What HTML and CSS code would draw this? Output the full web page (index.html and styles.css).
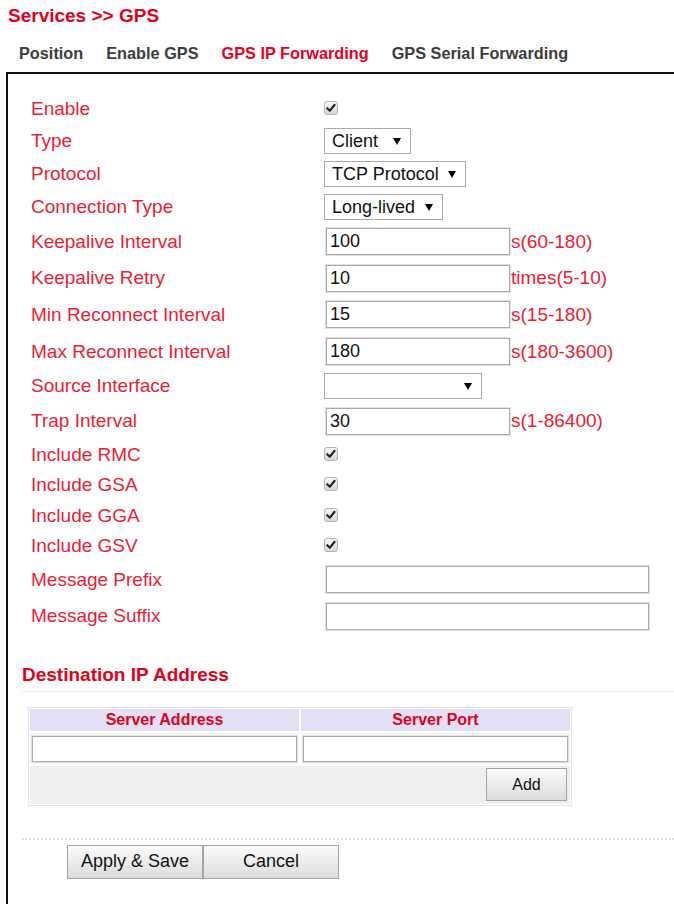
FILE: index.html
```html
<!DOCTYPE html>
<html lang="en">
<head>
<meta charset="utf-8">
<title>Services &gt;&gt; GPS</title>
<link rel="stylesheet" href="styles.css">
</head>
<body>
<div class="page">
  <h1 class="title">Services &gt;&gt; GPS</h1>
  <nav class="tabs">
    <a class="tab">Position</a>
    <a class="tab">Enable GPS</a>
    <a class="tab active">GPS IP Forwarding</a>
    <a class="tab">GPS Serial Forwarding</a>
  </nav>
  <div class="box">
    <form class="form">
      <div class="row r-cb"><label class="lbl">Enable</label><span class="check"><svg viewBox="0 0 14 14" width="12" height="12"><path d="M2.6 7.2 L5.6 10.2 L11.2 3.2" fill="none" stroke="#222" stroke-width="2.4" stroke-linecap="round" stroke-linejoin="round"/></svg></span></div>
      <div class="row r-sel"><label class="lbl">Type</label><span class="sel"><select class="w-client"><option>Client</option></select></span></div>
      <div class="row r-sel"><label class="lbl">Protocol</label><span class="sel"><select class="w-tcp"><option>TCP Protocol</option></select></span></div>
      <div class="row r-sel"><label class="lbl">Connection Type</label><span class="sel"><select class="w-long"><option>Long-lived</option></select></span></div>
      <div class="row r-inp"><label class="lbl">Keepalive Interval</label><input class="txt" type="text" value="100"><span class="unit">s(60-180)</span></div>
      <div class="row r-inp"><label class="lbl">Keepalive Retry</label><input class="txt" type="text" value="10"><span class="unit">times(5-10)</span></div>
      <div class="row r-inp"><label class="lbl">Min Reconnect Interval</label><input class="txt" type="text" value="15"><span class="unit">s(15-180)</span></div>
      <div class="row r-inp"><label class="lbl">Max Reconnect Interval</label><input class="txt" type="text" value="180"><span class="unit">s(180-3600)</span></div>
      <div class="row r-sel"><label class="lbl">Source Interface</label><span class="sel"><select class="w-src"><option></option></select></span></div>
      <div class="row r-inp"><label class="lbl">Trap Interval</label><input class="txt" type="text" value="30"><span class="unit">s(1-86400)</span></div>
      <div class="row r-cb"><label class="lbl">Include RMC</label><span class="check"><svg viewBox="0 0 14 14" width="12" height="12"><path d="M2.6 7.2 L5.6 10.2 L11.2 3.2" fill="none" stroke="#222" stroke-width="2.4" stroke-linecap="round" stroke-linejoin="round"/></svg></span></div>
      <div class="row r-cb"><label class="lbl">Include GSA</label><span class="check"><svg viewBox="0 0 14 14" width="12" height="12"><path d="M2.6 7.2 L5.6 10.2 L11.2 3.2" fill="none" stroke="#222" stroke-width="2.4" stroke-linecap="round" stroke-linejoin="round"/></svg></span></div>
      <div class="row r-cb"><label class="lbl">Include GGA</label><span class="check"><svg viewBox="0 0 14 14" width="12" height="12"><path d="M2.6 7.2 L5.6 10.2 L11.2 3.2" fill="none" stroke="#222" stroke-width="2.4" stroke-linecap="round" stroke-linejoin="round"/></svg></span></div>
      <div class="row r-cb"><label class="lbl">Include GSV</label><span class="check"><svg viewBox="0 0 14 14" width="12" height="12"><path d="M2.6 7.2 L5.6 10.2 L11.2 3.2" fill="none" stroke="#222" stroke-width="2.4" stroke-linecap="round" stroke-linejoin="round"/></svg></span></div>
      <div class="row r-inp"><label class="lbl">Message Prefix</label><input class="txt wide" type="text" value=""></div>
      <div class="row r-inp"><label class="lbl">Message Suffix</label><input class="txt wide" type="text" value=""></div>
    </form>

    <h2 class="sec">Destination IP Address</h2>
    <div class="dest">
      <div class="th">Server Address</div>
      <div class="th">Server Port</div>
      <div class="td"><input class="cell-input" type="text"></div>
      <div class="td"><input class="cell-input" type="text"></div>
      <div class="add-row"><button class="btn btn-add" type="button">Add</button></div>
    </div>

    <div class="actions">
      <button class="btn btn-main" type="button">Apply &amp; Save</button>
      <button class="btn btn-main" type="button">Cancel</button>
    </div>
  </div>
</div>
</body>
</html>
```

FILE: styles.css
```css
html {
  overflow: hidden;
}

body {
  margin: 0;
  background: #fff;
  font-family: "Liberation Sans", Arial, sans-serif;
  color: #222;
}

.title {
  margin: 0;
  padding: 5px 0 0 8px;
  font-size: 19px;
  line-height: 22px;
  font-weight: bold;
  color: #e2001a;
}

.tabs {
  display: flex;
  gap: 23px;
  margin-top: 16px;
  padding-left: 19px;
  font-size: 16.3px;
  line-height: 20px;
  font-weight: bold;
  color: #3c3c3c;
}

.tab.active {
  color: #e60020;
}

.box {
  margin: 9px 0 0 6px;
  height: 832px;
  box-sizing: border-box;
  border-top: 2px solid #111;
  border-left: 2px solid #111;
  padding: 20px 0 0 14px;
}

.form {
  margin: 0;
}

.row {
  display: flex;
  align-items: center;
  padding-left: 9px;
}

.r-cb { height: 30.5px; }
.r-sel { height: 33px; }
.r-inp { height: 36.6px; }

.lbl {
  width: 293px;
  flex: none;
  font-size: 19px;
  color: #ec1c33;
}

.check {
  display: inline-flex;
  align-items: center;
  justify-content: center;
  width: 14px;
  height: 14px;
  box-sizing: border-box;
  border: 1px solid #b3b3b3;
  border-radius: 3px;
  background: linear-gradient(#f6f6f6, #d6d6d6);
  margin-top: -2px;
}

.sel {
  position: relative;
  display: inline-block;
  height: 26px;
}

.sel::after {
  content: "";
  position: absolute;
  right: 10px;
  top: 10px;
  border-left: 4px solid transparent;
  border-right: 4px solid transparent;
  border-top: 7px solid #000;
  pointer-events: none;
}

.sel select {
  appearance: none;
  -webkit-appearance: none;
  height: 26px;
  box-sizing: border-box;
  margin: 0;
  padding: 0 0 0 7px;
  border: 1px solid #a9a9a9;
  border-radius: 0;
  background: #fff;
  font-family: "Liberation Sans", Arial, sans-serif;
  font-size: 18px;
  color: #111;
}

.w-client { width: 87px; }
.w-tcp { width: 142px; }
.w-long { width: 119px; }
.w-src { width: 158px; }

.txt {
  width: 184px;
  height: 27px;
  box-sizing: border-box;
  margin: 0 0 0 2px;
  padding: 0 3px;
  border: 1px solid #a9a9a9;
  box-shadow: 0 0 0 1px #e2e2e2;
  font-family: "Liberation Sans", Arial, sans-serif;
  font-size: 18px;
  color: #111;
  outline: none;
}

.txt.wide {
  width: 323px;
}

.unit {
  margin-left: 1px;
  font-size: 19px;
  color: #ec1c33;
}

.sec {
  margin: 28px 0 0;
  padding-bottom: 5px;
  border-bottom: 1px solid #ececec;
  font-size: 19px;
  line-height: 23px;
  font-weight: bold;
  color: #e2001a;
}

.dest {
  display: grid;
  grid-template-columns: 1fr 1fr;
  gap: 2px;
  width: 544px;
  box-sizing: border-box;
  margin: 15px 0 0 6px;
  padding: 1px;
  border: 1px solid #e3e3e3;
}

.th {
  height: 22px;
  line-height: 22px;
  background: #e3e0f6;
  text-align: center;
  font-size: 16px;
  font-weight: bold;
  color: #e2001a;
}

.td {
  padding: 3px 2px 2px 2px;
  background: #f7f7f7;
}

.cell-input {
  display: block;
  width: 100%;
  height: 26px;
  box-sizing: border-box;
  margin: 0;
  border: 1px solid #a9a9a9;
  box-shadow: 0 0 0 1px #e2e2e2;
  background: #fff;
  outline: none;
}

.add-row {
  grid-column: 1 / -1;
  display: flex;
  justify-content: flex-end;
  align-items: center;
  height: 38px;
  padding-right: 3px;
  background: #efefef;
}

.btn {
  box-sizing: border-box;
  margin: 0;
  border: 1px solid #a3a3a3;
  border-radius: 0;
  background: linear-gradient(#fbfbfb, #dcdcdc);
  font-family: "Liberation Sans", Arial, sans-serif;
  color: #111;
  padding: 0;
}

.btn-add {
  width: 81px;
  height: 33px;
  font-size: 16px;
}

.actions {
  display: flex;
  margin-top: 32px;
  border-top: 2px dotted #dcdcdc;
  padding: 5px 0 0 45px;
}

.btn-main {
  width: 136px;
  height: 34px;
  font-size: 18px;
}
```
